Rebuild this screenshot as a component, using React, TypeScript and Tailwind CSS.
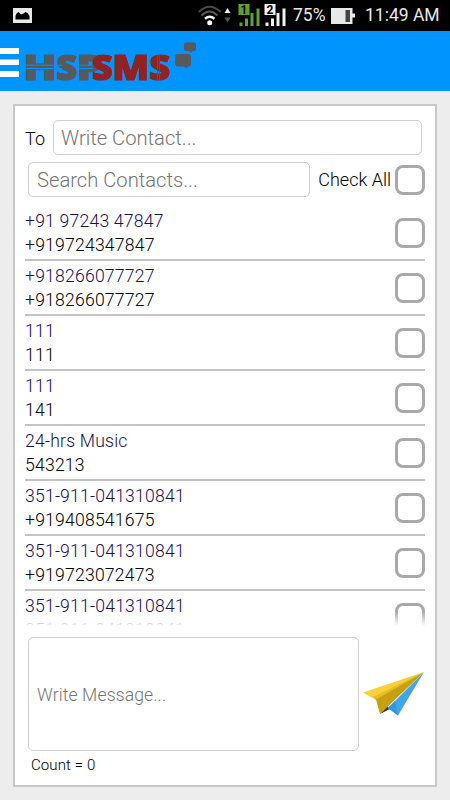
import { useState } from "react";

const contacts = [
    { name: "+91 97243 47847", number: "+919724347847" },
    { name: "+918266077727", number: "+918266077727" },
    { name: "111", number: "111" },
    { name: "111", number: "141" },
    { name: "24-hrs Music", number: "543213" },
    { name: "351-911-041310841", number: "+919408541675" },
    { name: "351-911-041310841", number: "+919723072473" },
    { name: "351-911-041310841", number: "351-911-041310841" },
];

const StatusBar = () => {
    return (
        <div className="h-[31px] shrink-0 bg-black text-[#e8e8e8] flex items-center">
            <svg className="ml-[13px]" width="19" height="15" viewBox="0 0 19 15">
                <path fill="#e8e8e8" fillRule="evenodd" d="M0 0h19v15H0zM2.500 11.500h14V8q-1.500-3.500-4-4l-2 1.500L8 6.500 5.500 4Q3 5 2.500 8z" />
            </svg>
            {/* wifi, data arrows, two sims */}
            <svg className="ml-[166px]" width="90" height="24" viewBox="198 4 90 24">
                <g fill="none" strokeWidth="2">
                    <path stroke="#4a4a4a" d="M198.700 12q11-10.500 22 0" />
                    <path stroke="#555" d="M201.500 15.500q8-8 16 0" />
                    <path stroke="#f4f4f4" strokeWidth="2.500" d="M205 18.800q4.700-4 9.400 0" />
                </g>
                <circle cx="209.700" cy="22.700" r="2.500" fill="#fff" />
                <path d="M224.500 13l3-5 3 5z" fill="#f0f0f0" />
                <path d="M224.500 17.500l3 5 3-5z" fill="#555" />
                <path fill="#5ba52e" d="M238.500 4h11v11h-11zM239.500 22.500h3V26h-3zM245 18.500h3V26h-3zM250.500 13h3v13h-3zM256.500 8.500h3V26h-3z" />
                <path fill="#f1f1f1" d="M264.500 4h11v11h-11zM265.500 22.500h3V26h-3zM271 18.500h3V26h-3zM276.500 13h3v13h-3zM282.500 8.500h3V26h-3z" />
                <text x="240.500" y="14" fontSize="12" fontWeight="700" fill="#000">1</text>
                <text x="266.500" y="14" fontSize="12" fontWeight="700" fill="#000">2</text>
            </svg>
            <span className="ml-[5px] w-[38px] text-[17.500px] whitespace-nowrap">75%</span>
            <svg className="shrink-0" width="24" height="18" viewBox="0 0 24 18">
                <path fill="#e8e8e8" d="M0 1h21.500v5.500H24v4h-2.500V17H0z" />
                <path fill="#444" d="M14.500 3h4.500v12h-4.500z" />
            </svg>
            <span className="ml-[10px] text-[17.500px] whitespace-nowrap">11:49 AM</span>
        </div>
    );
};

const Header = () => {
    return (
        <div className="h-[60px] shrink-0 bg-[#0094ff] flex">
            <svg width="200" height="60" viewBox="0 0 200 60" fontFamily="'Open Sans', sans-serif" fontWeight="800" fontSize="35">
                <path fill="#fff" d="M0 17h19v6H0zM0 28.500h19v5.500H0zM0 40h19v6H0z" />
                <g fill="#58595b" stroke="#58595b" strokeWidth="1.200">
                    <text x="23.500" y="49" textLength="33.500" lengthAdjust="spacingAndGlyphs">H</text>
                    <text x="56.500" y="49" textLength="21" lengthAdjust="spacingAndGlyphs">S</text>
                    <text x="77" y="49" textLength="26" lengthAdjust="spacingAndGlyphs">P</text>
                </g>
                <path stroke="#0094ff" strokeWidth="1" d="M26 34.200h36M26 37.500h36M80 34.200h13M80 37.500h13" />
                <g fill="#90231f" stroke="#90231f" strokeWidth="1.200">
                    <text x="92" y="49" textLength="21" lengthAdjust="spacingAndGlyphs">S</text>
                    <text x="112.500" y="49" textLength="37" lengthAdjust="spacingAndGlyphs">M</text>
                    <text x="149.500" y="49" textLength="21" lengthAdjust="spacingAndGlyphs">S</text>
                </g>
                <path stroke="#31589a" strokeWidth="1" d="M157.500 24v25M159.500 24v25" />
                <path fill="#58595b" d="M186 11.500h8q2 0 2 2v4.500q0 2-2 2h-1.500l-2 2-1-2H186q-2 0-2-2v-4.500q0-2 2-2zM178 23h10q3 0 3 3v7q0 2.500-3 2.500l-1.500 2-2.500-2h-6q-3 0-3-3V26q0-3 3-3z" />
            </svg>
        </div>
    );
};

const Check = () => {
    const [on, setOn] = useState(false);
    return (
        <button
            onClick={() => setOn(!on)}
            className={`w-[30px] h-[30px] shrink-0 rounded-[8px] border-3 border-[#a9a9a9] ${on ? "bg-[#a9a9a9]" : "bg-white"}`}
        />
    );
};

const ContactList = () => {
    return (
        <div className="relative h-[420px] shrink-0 overflow-hidden">
            {contacts.map((c, i) => (
                <div key={i} className="h-[55px] flex items-center justify-between border-b-2 border-[#c4c4c4]">
                    <div className="pt-px text-[17.600px] leading-[24px] tracking-[0.2px]">
                        <div className="text-[#191054]">{c.name}</div>
                        <div className="text-black">{c.number}</div>
                    </div>
                    <Check />
                </div>
            ))}
            {/* fade at the scroll edge */}
            <div className="absolute bottom-0 left-0 w-full h-[15px] bg-linear-to-b from-white/0 to-white" />
        </div>
    );
};

const Plane = () => {
    return (
        <svg className="ml-[4px] mt-[35px]" width="62" height="44" viewBox="0 0 62 44">
            <path fill="#3b3b3b" d="M17 42l7-8 3 3z" />
            <path fill="#3ea6ec" d="M61 0L35 43.500 25 36z" />
            <path fill="#3298dc" d="M35 43.500L32 29 25 36z" />
            <path fill="#f9d038" d="M0 20.500L61 0 13 28z" />
            <path fill="#e6bd26" d="M61 0L10 25l3 3z" />
            <path fill="#c6a011" d="M13 27.500L61 0 17 42z" />
        </svg>
    );
};

const App = () => {
    const [to, setTo] = useState("");
    const [search, setSearch] = useState("");
    const [message, setMessage] = useState("");

    const field = "block border border-[#cfcfcf] rounded-[5px] bg-white outline-none placeholder:text-[#757575]";

    return (
        <div className="w-[450px] h-[800px] flex flex-col overflow-hidden bg-[#ededed] font-['Roboto',sans-serif]">
            <StatusBar />
            <Header />
            <div className="mt-[13px] ml-[13px] w-[424px] h-[683px] border-[2px] border-[#c8c8c8] bg-white pl-[10px] pr-[10px] pt-[14px] flex flex-col font-light">
                <div className="flex items-center h-[35px] shrink-0">
                    <span className="w-[28px] pt-[2px] text-[18px] text-black">To</span>
                    <input className={`${field} w-[369px] h-[35px] px-[7px] pt-px text-[20.200px]`} placeholder="Write Contact..." value={to} onChange={(e) => setTo(e.target.value)} />
                </div>
                <div className="mt-[7px] mb-[9px] flex items-center justify-between h-[35px] shrink-0">
                    <input className={`${field} ml-[3px] w-[282px] h-[35px] px-[8px] pt-px text-[20.200px]`} placeholder="Search Contacts..." value={search} onChange={(e) => setSearch(e.target.value)} />
                    <div className="flex items-center gap-[4px]">
                        <span className="text-[18px] text-black">Check All</span>
                        <Check />
                    </div>
                </div>
                <ContactList />
                <div className="mt-[11px] flex shrink-0">
                    <textarea
                        className={`${field} ml-[3px] w-[331px] h-[114px] px-[8px] py-[46px] text-[17.600px] leading-[22px] tracking-[0.1px] resize-none overflow-hidden`}
                        placeholder="Write Message..."
                        value={message}
                        onChange={(e) => setMessage(e.target.value)}
                    />
                    <Plane />
                </div>
                <div className="ml-[6px] mt-[4px] text-[15px] leading-[20px] tracking-[0.1px] text-black">Count = {message.length}</div>
            </div>
        </div>
    );
};
export default App;
